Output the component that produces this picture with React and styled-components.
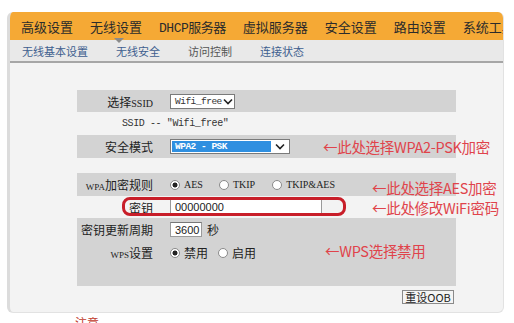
import styled, { createGlobalStyle } from "styled-components";

const GlobalStyle = createGlobalStyle`
  html, body {
    margin: 0;
    padding: 0;
    background: #ffffff;
    font-family: "Noto Sans CJK SC", "Noto Sans", sans-serif;
    color: #222;
  }
`;

const Panel = styled.div`
  width: 497px;
  height: 301px;
  margin: 12px 0 0 7px;
  background: #f3f3f3;
  border-left: 3px solid #dcdcdc;
  border-right: 1px solid #e2e2e2;
  border-bottom: 1px solid #e2e2e2;
  border-radius: 6px;
  overflow: hidden;
  box-sizing: border-box;
`;

const TopNav = styled.div`
  height: 28px;
  background: #f5a935;
  display: flex;
  align-items: center;
  gap: 17px;
  padding-left: 11px;
  white-space: nowrap;
  overflow: hidden;
  font-size: 13px;
  color: #2b2b2b;
`;

const NavItem = styled.span`
  font-family: ${(p) => (p.$latin ? '"Liberation Mono", "Noto Sans CJK SC", monospace' : '"Noto Sans CJK SC", sans-serif')};
  letter-spacing: ${(p) => (p.$latin ? "-0.5px" : "0")};
`;

const SubNav = styled.div`
  height: 21px;
  background: #e9e9e9;
  border-bottom: 2px solid #a6a6a6;
  display: flex;
  align-items: center;
  gap: 28px;
  padding-left: 12px;
  font-size: 11px;
  white-space: nowrap;
`;

const SubItem = styled.span`
  position: relative;
  color: ${(p) => (p.$dark ? "#555" : "#3f5f8f")};

  ${(p) =>
    p.$active &&
    `
    &::before {
      content: "";
      position: absolute;
      top: -5px;
      left: -2px;
      border-left: 5px solid transparent;
      border-right: 5px solid transparent;
      border-top: 5px solid #8a8a8a;
    }
  `}
`;

const Content = styled.div`
  padding: 27px 0 0 67px;
`;

const FormTable = styled.div`
  width: 379px;
`;

const Row = styled.div`
  position: relative;
  display: flex;
  align-items: center;
  height: ${(p) => p.$h || 23}px;
  background: ${(p) => (p.$shade ? "#d3d3d3" : "transparent")};
`;

const Label = styled.div`
  width: 76px;
  text-align: right;
  font-size: 12px;
  color: #222;
  white-space: nowrap;
`;

const Small = styled.span`
  font-family: "Liberation Serif", serif;
  font-size: 9px;
`;

const Control = styled.div`
  display: flex;
  align-items: center;
  padding-left: 17px;
  font-size: 12px;
`;

const SelectBox = styled.div`
  display: flex;
  align-items: stretch;
  width: ${(p) => p.$w}px;
  height: 15px;
  border: 1px solid #7a7a7a;
  background: #fff;
  box-sizing: border-box;
`;

const SelectValue = styled.div`
  flex: 1;
  display: flex;
  align-items: center;
  padding-left: 3px;
  margin: 1px 0 1px 1px;
  font-family: "Liberation Mono", monospace;
  font-size: 9.5px;
  letter-spacing: -0.5px;
  color: ${(p) => (p.$selected ? "#fff" : "#333")};
  background: ${(p) => (p.$selected ? "#2f8fe0" : "transparent")};
  font-weight: ${(p) => (p.$selected ? "bold" : "normal")};
`;

const SelectArrow = styled.div`
  width: 18px;
  display: flex;
  align-items: center;
  justify-content: center;
`;

const SsidText = styled.div`
  padding-left: 45px;
  font-family: "Liberation Mono", monospace;
  font-size: 10px;
  letter-spacing: -0.4px;
  color: #333;
`;

const Radio = styled.span`
  display: inline-block;
  width: 8px;
  height: 8px;
  border: 1px solid #8a8a8a;
  border-radius: 50%;
  background: ${(p) => (p.$on ? "radial-gradient(circle, #222 0 2.2px, #fff 2.8px)" : "#fff")};
  margin-right: 4px;
  flex-shrink: 0;
`;

const RadioText = styled.span`
  font-family: ${(p) => (p.$latin ? '"Liberation Serif", serif' : '"Noto Sans CJK SC", sans-serif')};
  font-size: ${(p) => (p.$latin ? "10px" : "12px")};
  margin-right: ${(p) => p.$gap || 0}px;
  color: #222;
`;

const TextInput = styled.div`
  width: ${(p) => p.$w}px;
  height: ${(p) => p.$h || 15}px;
  background: #fff;
  border: 1px solid #9a9a9a;
  border-top-color: #777;
  box-sizing: border-box;
  display: flex;
  align-items: center;
  padding-left: 4px;
  font-family: "Liberation Sans", Arial, sans-serif;
  font-size: 11px;
  color: #222;
`;

const Unit = styled.span`
  margin-left: 5px;
  font-size: 12px;
`;

const Note = styled.div`
  position: absolute;
  left: ${(p) => p.$left}px;
  top: ${(p) => p.$top}px;
  font-size: 14.5px;
  line-height: 16px;
  color: #e0434b;
  white-space: nowrap;
  letter-spacing: -0.3px;
`;

const Oval = styled.div`
  position: absolute;
  left: 45px;
  top: 1px;
  width: 224px;
  height: 19px;
  border: 3px solid #c81e29;
  border-radius: 8px;
  box-sizing: border-box;
  pointer-events: none;
`;

const ButtonRow = styled.div`
  display: flex;
  justify-content: flex-end;
  padding-top: 4px;
`;

const ResetButton = styled.div`
  width: 52px;
  height: 14px;
  box-sizing: border-box;
  border: 1px solid #8a8a8a;
  background: #f4f4f4;
  display: flex;
  align-items: center;
  justify-content: center;
  font-size: 11px;
  color: #222;
  margin-right: 2px;
`;

const Footer = styled.div`
  margin: 1px 0 0 75px;
  font-size: 12px;
  color: #c0392b;
`;

function Chevron() {
  return (
    <svg width="10" height="7" viewBox="0 0 10 7">
      <path d="M1 1.5 L5 5.5 L9 1.5" fill="none" stroke="#222" strokeWidth="1.6" />
    </svg>
  );
}

export default function App() {
  return (
    <>
      <GlobalStyle />
      <Panel>
        <TopNav>
          <NavItem>高级设置</NavItem>
          <NavItem>无线设置</NavItem>
          <NavItem $latin>DHCP服务器</NavItem>
          <NavItem>虚拟服务器</NavItem>
          <NavItem>安全设置</NavItem>
          <NavItem>路由设置</NavItem>
          <NavItem>系统工具</NavItem>
        </TopNav>
        <SubNav>
          <SubItem>无线基本设置</SubItem>
          <SubItem $active>无线安全</SubItem>
          <SubItem $dark>访问控制</SubItem>
          <SubItem>连接状态</SubItem>
        </SubNav>
        <Content>
          <FormTable>
            <Row $shade $h={22}>
              <Label>
                选择<Small style={{ fontSize: 10 }}>SSID</Small>
              </Label>
              <Control>
                <SelectBox $w={65}>
                  <SelectValue>Wifi_free</SelectValue>
                  <SelectArrow>
                    <Chevron />
                  </SelectArrow>
                </SelectBox>
              </Control>
            </Row>
            <Row $h={23}>
              <SsidText>SSID -- "Wifi_free"</SsidText>
            </Row>
            <Row $shade $h={23}>
              <Label>安全模式</Label>
              <Control>
                <SelectBox $w={120}>
                  <SelectValue $selected>WPA2 - PSK</SelectValue>
                  <SelectArrow>
                    <Chevron />
                  </SelectArrow>
                </SelectBox>
              </Control>
              <Note $left={246} $top={4}>←此处选择WPA2-PSK加密</Note>
            </Row>
            <Row $h={15} />
            <Row $shade $h={23}>
              <Label>
                <Small>WPA</Small>加密规则
              </Label>
              <Control>
                <Radio $on />
                <RadioText $latin $gap={16}>AES</RadioText>
                <Radio />
                <RadioText $latin $gap={17}>TKIP</RadioText>
                <Radio />
                <RadioText $latin>TKIP&amp;AES</RadioText>
              </Control>
              <Note $left={295} $top={7}>←此处选择AES加密</Note>
            </Row>
            <Row $h={22}>
              <Label>密钥</Label>
              <Control>
                <TextInput $w={152} $h={16}>00000000</TextInput>
              </Control>
              <Oval />
              <Note $left={295} $top={4}>←此处修改WiFi密码</Note>
            </Row>
            <Row $shade $h={23}>
              <Label>密钥更新周期</Label>
              <Control>
                <TextInput $w={32} $h={15}>3600</TextInput>
                <Unit>秒</Unit>
              </Control>
            </Row>
            <Row $shade $h={23}>
              <Label>
                <Small>WPS</Small>设置
              </Label>
              <Control>
                <Radio $on />
                <RadioText $gap={10}>禁用</RadioText>
                <Radio />
                <RadioText>启用</RadioText>
              </Control>
              <Note $left={248} $top={2}>←WPS选择禁用</Note>
            </Row>
            <Row $shade $h={22} />
            <ButtonRow>
              <ResetButton>重设OOB</ResetButton>
            </ButtonRow>
          </FormTable>
        </Content>
      </Panel>
      <Footer>注意</Footer>
    </>
  );
}
